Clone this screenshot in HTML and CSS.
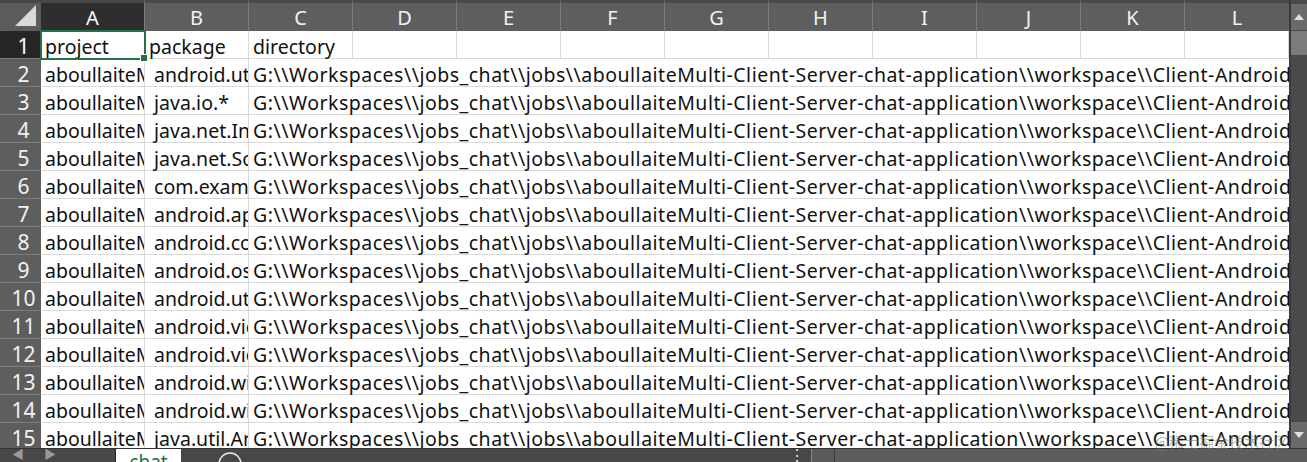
FILE: index.html
```html
<!DOCTYPE html>
<html>
<head>
<meta charset="utf-8">
<link rel="stylesheet" href="styles.css">
</head>
<body>
<div class="app">
  <div class="top">
    <div class="sheet">
      <div class="corner"><svg width="41" height="31" viewBox="0 0 41 31"><polygon points="36,5 36,26 15,26" fill="#d9d9d9"/></svg></div>
      <div class="ch sel">A</div><div class="ch">B</div><div class="ch">C</div><div class="ch">D</div><div class="ch">E</div><div class="ch">F</div><div class="ch">G</div><div class="ch">H</div><div class="ch">I</div><div class="ch">J</div><div class="ch">K</div><div class="ch last">L</div>

      <div class="rh sel">1</div>
      <div class="c active">project</div><div class="c">package</div><div class="c">directory</div><div class="c"></div><div class="c"></div><div class="c"></div><div class="c"></div><div class="c"></div><div class="c"></div><div class="c"></div><div class="c"></div><div class="c"></div>

      <div class="rh">2</div><div class="c">aboullaiteMulti</div><div class="c"> android.util.Log</div><div class="c wide">G:\\Workspaces\\jobs_chat\\jobs\\aboullaiteMulti-Client-Server-chat-application\\workspace\\Client-Android\\app</div>
      <div class="rh">3</div><div class="c">aboullaiteMulti</div><div class="c"> java.io.*</div><div class="c wide">G:\\Workspaces\\jobs_chat\\jobs\\aboullaiteMulti-Client-Server-chat-application\\workspace\\Client-Android\\app</div>
      <div class="rh">4</div><div class="c">aboullaiteMulti</div><div class="c"> java.net.InetAddress</div><div class="c wide">G:\\Workspaces\\jobs_chat\\jobs\\aboullaiteMulti-Client-Server-chat-application\\workspace\\Client-Android\\app</div>
      <div class="rh">5</div><div class="c">aboullaiteMulti</div><div class="c"> java.net.Socket</div><div class="c wide">G:\\Workspaces\\jobs_chat\\jobs\\aboullaiteMulti-Client-Server-chat-application\\workspace\\Client-Android\\app</div>
      <div class="rh">6</div><div class="c">aboullaiteMulti</div><div class="c"> com.example</div><div class="c wide">G:\\Workspaces\\jobs_chat\\jobs\\aboullaiteMulti-Client-Server-chat-application\\workspace\\Client-Android\\app</div>
      <div class="rh">7</div><div class="c">aboullaiteMulti</div><div class="c"> android.app</div><div class="c wide">G:\\Workspaces\\jobs_chat\\jobs\\aboullaiteMulti-Client-Server-chat-application\\workspace\\Client-Android\\app</div>
      <div class="rh">8</div><div class="c">aboullaiteMulti</div><div class="c"> android.content</div><div class="c wide">G:\\Workspaces\\jobs_chat\\jobs\\aboullaiteMulti-Client-Server-chat-application\\workspace\\Client-Android\\app</div>
      <div class="rh">9</div><div class="c">aboullaiteMulti</div><div class="c"> android.os</div><div class="c wide">G:\\Workspaces\\jobs_chat\\jobs\\aboullaiteMulti-Client-Server-chat-application\\workspace\\Client-Android\\app</div>
      <div class="rh">10</div><div class="c">aboullaiteMulti</div><div class="c"> android.util</div><div class="c wide">G:\\Workspaces\\jobs_chat\\jobs\\aboullaiteMulti-Client-Server-chat-application\\workspace\\Client-Android\\app</div>
      <div class="rh">11</div><div class="c">aboullaiteMulti</div><div class="c"> android.view</div><div class="c wide">G:\\Workspaces\\jobs_chat\\jobs\\aboullaiteMulti-Client-Server-chat-application\\workspace\\Client-Android\\app</div>
      <div class="rh">12</div><div class="c">aboullaiteMulti</div><div class="c"> android.view</div><div class="c wide">G:\\Workspaces\\jobs_chat\\jobs\\aboullaiteMulti-Client-Server-chat-application\\workspace\\Client-Android\\app</div>
      <div class="rh">13</div><div class="c">aboullaiteMulti</div><div class="c"> android.widget</div><div class="c wide">G:\\Workspaces\\jobs_chat\\jobs\\aboullaiteMulti-Client-Server-chat-application\\workspace\\Client-Android\\app</div>
      <div class="rh">14</div><div class="c">aboullaiteMulti</div><div class="c"> android.widget</div><div class="c wide">G:\\Workspaces\\jobs_chat\\jobs\\aboullaiteMulti-Client-Server-chat-application\\workspace\\Client-Android\\app</div>
      <div class="rh">15</div><div class="c">aboullaiteMulti</div><div class="c"> java.util.ArrayList</div><div class="c wide">G:\\Workspaces\\jobs_chat\\jobs\\aboullaiteMulti-Client-Server-chat-application\\workspace\\Client-Android\\app</div>
    </div>
    <div class="vscroll">
      <div class="vbtn up"><svg width="10" height="6" viewBox="0 0 10 6"><polygon points="0,6 5,0 10,6" fill="#e0e0e0"/></svg></div>
      <div class="vthumb"></div>
      <div class="vtrack"></div>
      <div class="vbtn down"><svg width="10" height="6" viewBox="0 0 10 6"><polygon points="0,0 5,6 10,0" fill="#e0e0e0"/></svg></div>
    </div>
  </div>
  <div class="tabbar">
    <div class="nav"><span>◀</span><span>▶</span></div>
    <div class="tab">chat</div>
    <div class="add"><svg width="26" height="26" viewBox="0 0 26 26"><circle cx="13" cy="13" r="11" fill="none" stroke="#e8e8e8" stroke-width="1.5"/></svg></div>
    <div class="spacer"></div>
    <div class="dots">⋮</div>
    <div class="hbtn"></div>
    <div class="htrack"></div>
  </div>
  <div class="watermark">@稀土掘金技术社区</div>
</div>
</body>
</html>
```
FILE: styles.css
```css
html, body {
  margin: 0;
  padding: 0;
  background: #3a3a3a;
  overflow: hidden;
}
.app {
  position: relative;
  width: 1307px;
  height: 462px;
  display: flex;
  flex-direction: column;
  font-family: "Noto Sans", "Noto Sans CJK SC", sans-serif;
}
.top {
  display: flex;
  height: 449px;
  overflow: hidden;
}
.sheet {
  width: 1289px;
  display: grid;
  grid-template-columns: 41px repeat(12, 104px);
  grid-template-rows: 31px repeat(15, 28px);
  background: #ffffff;
  overflow: hidden;
}
.corner {
  background: #5b5b5b;
  border-top: 3px solid #484848;
  box-sizing: border-box;
  display: flex;
  align-items: flex-end;
}
.corner svg { display: block; margin-top: -3px; }
.ch {
  background: #5e5e5e;
  color: #f2f2f2;
  border-top: 3px solid #484848;
  border-right: 1px solid #7c7c7c;
  box-sizing: border-box;
  display: flex;
  align-items: center;
  justify-content: center;
  font-size: 20px;
  padding-top: 1px;
}
.ch.sel { background: #2e2e2e; color: #ffffff; border-bottom: 1px solid #217346; }
.ch.last { border-right: none; }
.rh {
  background: #5e5e5e;
  color: #f2f2f2;
  border-bottom: 1px solid #7c7c7c;
  box-sizing: border-box;
  display: flex;
  align-items: center;
  justify-content: center;
  font-size: 21px;
  padding-left: 6px;
  padding-top: 3px;
}
.rh.sel { background: #262626; color: #ffffff; }
.c {
  border-right: 1px solid #d9d9d9;
  border-bottom: 1px solid #d9d9d9;
  box-sizing: border-box;
  white-space: pre;
  overflow-x: clip;
  overflow-y: visible;
  font-size: 19.5px;
  color: #111111;
  line-height: 28px;
  padding-top: 2px;
  padding-left: 4px;
}
.c.wide { grid-column: span 10; border-right: none; letter-spacing: 0.5px; }
.c.active {
  position: relative;
  overflow: visible;
  outline: 2px solid #217346;
  outline-offset: -1px;
}
.c.active::after {
  content: "";
  position: absolute;
  right: -4px;
  bottom: -4px;
  width: 6px;
  height: 6px;
  background: #217346;
  border: 1px solid #ffffff;
}
.vscroll {
  width: 18px;
  background: #4a4a4a;
  border-left: 2px solid #3b3b3b;
  box-sizing: border-box;
  display: flex;
  flex-direction: column;
}
.vbtn {
  height: 26px;
  background: #6a6a6a;
  display: flex;
  align-items: flex-start;
  justify-content: center;
  padding-top: 10px;
  box-sizing: border-box;
}
.vbtn.up { margin-top: 4px; }
.vbtn.down { align-items: center; padding-top: 0; }
.vthumb {
  height: 24px;
  margin: 1px 0;
  background: #7b7b7b;
}
.vtrack { flex: 1; }
.tabbar {
  height: 13px;
  display: flex;
  align-items: flex-start;
  background: #474747;
  border-top: 1px solid #333333;
  overflow: hidden;
}
.nav {
  width: 115px;
  display: flex;
  gap: 20px;
  padding-left: 12px;
  color: #9a9a9a;
  font-size: 12px;
  line-height: 12px;
  box-sizing: border-box;
}
.tab {
  width: 66px;
  height: 13px;
  background: #ffffff;
  color: #217346;
  font-size: 19px;
  line-height: 26px;
  text-align: center;
  box-sizing: border-box;
  border-left: 1px solid #222;
}
.add {
  margin-left: 36px;
  margin-top: 2px;
}
.add svg { display: block; }
.spacer { flex: 1; }
.dots {
  color: #e0e0e0;
  font-size: 16px;
  line-height: 12px;
  width: 22px;
}
.hbtn {
  width: 22px;
  height: 13px;
  background: #5a5a5a;
  border-left: 1px solid #8a8a8a;
}
.htrack {
  width: 472px;
  height: 13px;
  background: #5d5d5d;
  border-left: 1px solid #3a3a3a;
}
.watermark {
  position: absolute;
  right: 18px;
  bottom: 10px;
  color: rgba(120, 120, 120, 0.55);
  font-size: 15px;
  font-family: "Noto Sans CJK SC", sans-serif;
}
```
